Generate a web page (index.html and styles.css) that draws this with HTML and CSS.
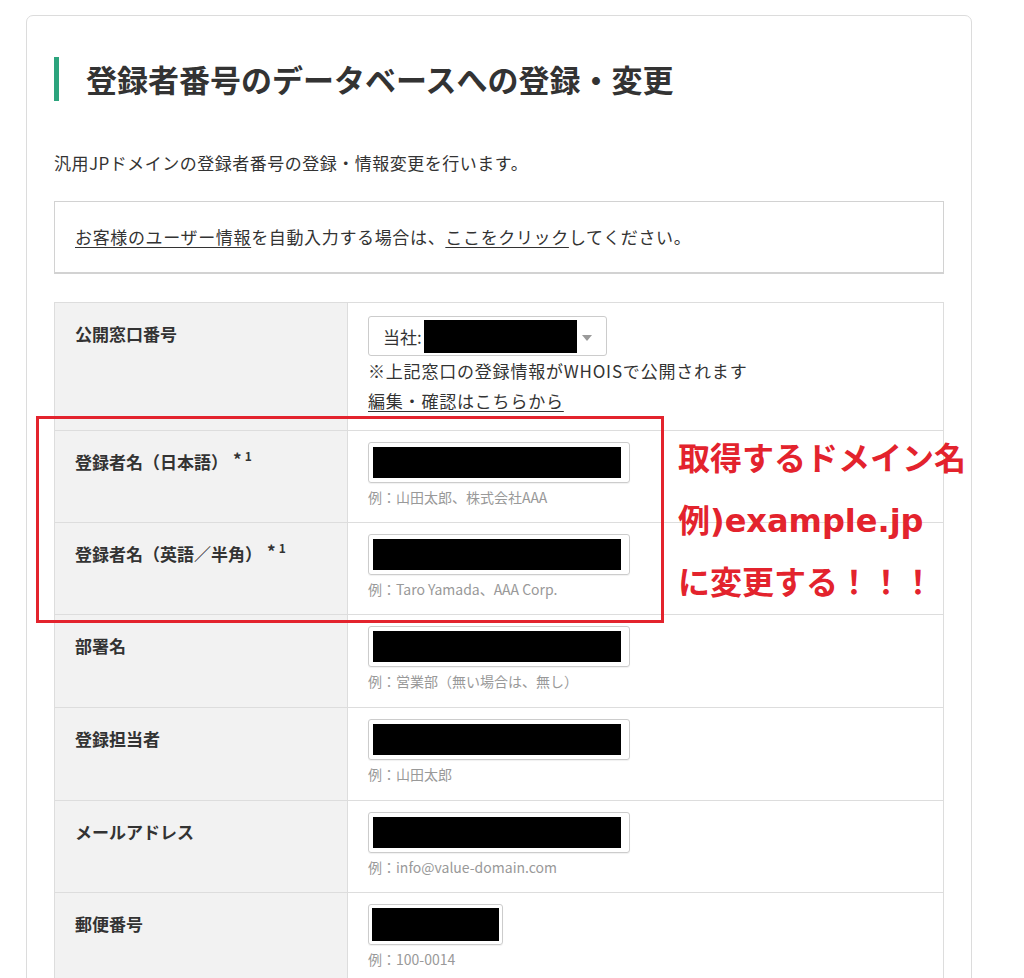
FILE: index.html
```html
<!DOCTYPE html>
<html lang="ja">
<head>
<meta charset="utf-8">
<title>登録者番号のデータベースへの登録・変更</title>
<link rel="stylesheet" href="styles.css">
</head>
<body>
<div class="page">
  <div class="card">
    <h1 class="title">登録者番号のデータベースへの登録・変更</h1>
    <p class="lead">汎用JPドメインの登録者番号の登録・情報変更を行います。</p>
    <div class="notice">
      <a class="link" href="#">お客様のユーザー情報</a>を自動入力する場合は、<a class="link" href="#">ここをクリック</a>してください。
    </div>
    <div class="form-table">
      <div class="row">
        <div class="th">公開窓口番号</div>
        <div class="td td-first">
          <div class="select">
            <span class="select-label">当社:</span>
            <span class="redact redact-select"></span>
            <span class="arrow"></span>
          </div>
          <p class="note">※上記窓口の登録情報がWHOISで公開されます</p>
          <p class="note"><a class="link" href="#">編集・確認はこちらから</a></p>
        </div>
      </div>
      <div class="row">
        <div class="th">登録者名（日本語）<span class="req">*<sup>1</sup></span></div>
        <div class="td">
          <div class="input"><span class="redact"></span></div>
          <p class="hint">例：山田太郎、株式会社AAA</p>
        </div>
      </div>
      <div class="row">
        <div class="th">登録者名（英語／半角）<span class="req">*<sup>1</sup></span></div>
        <div class="td">
          <div class="input"><span class="redact"></span></div>
          <p class="hint">例：Taro Yamada、AAA Corp.</p>
        </div>
      </div>
      <div class="row">
        <div class="th">部署名</div>
        <div class="td td-tall">
          <div class="input"><span class="redact"></span></div>
          <p class="hint">例：営業部（無い場合は、無し）</p>
        </div>
      </div>
      <div class="row">
        <div class="th">登録担当者</div>
        <div class="td td-tall">
          <div class="input"><span class="redact"></span></div>
          <p class="hint">例：山田太郎</p>
        </div>
      </div>
      <div class="row">
        <div class="th">メールアドレス</div>
        <div class="td">
          <div class="input"><span class="redact"></span></div>
          <p class="hint">例：info@value-domain.com</p>
        </div>
      </div>
      <div class="row">
        <div class="th">郵便番号</div>
        <div class="td">
          <div class="input input-short"><span class="redact"></span></div>
          <p class="hint">例：100-0014</p>
        </div>
      </div>
    </div>
  </div>

  <div class="annot-box"></div>
  <div class="annot-text">
    <p>取得するドメイン名</p>
    <p>例)example.jp</p>
    <p>に変更する！！！</p>
  </div>
</div>
</body>
</html>
```

FILE: styles.css
```css
* { box-sizing: border-box; }

html, body {
  margin: 0;
  padding: 0;
  background: #ffffff;
}

body {
  font-family: "Noto Sans CJK JP", "Noto Sans", sans-serif;
  color: #333333;
}

.page {
  position: relative;
  width: 1024px;
  height: 978px;
  overflow: hidden;
}

.card {
  margin: 15px 0 0 26px;
  width: 946px;
  min-height: 1000px;
  border: 1px solid #dcdcdc;
  border-radius: 7px;
  padding: 41px 27px 0 27px;
}

.title {
  margin: 0;
  border-left: 5px solid #2ca47d;
  padding-left: 27px;
  height: 44px;
  font-size: 31px;
  line-height: 44px;
  font-weight: 700;
  color: #333333;
}

.lead {
  margin: 50px 0 0 0;
  font-size: 17px;
  line-height: 24px;
  letter-spacing: 0.5px;
  color: #333333;
}

.notice {
  margin-top: 26px;
  border: 1px solid #d2d2d2;
  border-bottom: 2px solid #d2d2d2;
  padding: 22px 20px 22px 20px;
  font-size: 17px;
  line-height: 26px;
  letter-spacing: 0.65px;
  color: #333333;
}

.link {
  color: #333333;
  text-decoration: underline;
  text-underline-offset: 3px;
}

.form-table {
  margin-top: 28px;
  border: 1px solid #dddddd;
}

.row {
  display: grid;
  grid-template-columns: 293px 1fr;
  border-top: 1px solid #dddddd;
}

.row:first-child {
  border-top: none;
}

.th {
  background: #f2f2f2;
  border-right: 1px solid #dddddd;
  padding: 18px 20px 0 20px;
  font-size: 17px;
  line-height: 26px;
  font-weight: 700;
  color: #333333;
}

.req {
  font-size: 17px;
  font-weight: 700;
  margin-left: 5px;
  line-height: 0;
  vertical-align: 3px;
}

.req sup {
  font-size: 12px;
  margin-left: 3px;
  vertical-align: 5px;
}

.td {
  padding: 11px 20px 16px 20px;
}

.td-tall {
  padding-bottom: 17px;
}

.td-first {
  padding: 13px 20px 14px 20px;
}

.select {
  position: relative;
  display: flex;
  align-items: center;
  width: 239px;
  height: 40px;
  border: 1px solid #cccccc;
  border-radius: 3px;
  padding-left: 14px;
  background: #ffffff;
}

.select-label {
  font-size: 17px;
  line-height: 1;
  color: #333333;
}

.redact {
  display: block;
  background: #000000;
  height: 31px;
  width: 248px;
}

.redact-select {
  width: 153px;
  height: 33px;
  margin-left: 2px;
}

.arrow {
  position: absolute;
  right: 14px;
  top: 18px;
  width: 0;
  height: 0;
  border-left: 5px solid transparent;
  border-right: 5px solid transparent;
  border-top: 6px solid #9a9a9a;
}

.note {
  margin: 0;
  font-size: 17px;
  line-height: 30px;
  letter-spacing: 0.8px;
  color: #333333;
}

.input {
  width: 262px;
  height: 41px;
  border: 1px solid #cccccc;
  border-radius: 3px;
  box-shadow: 0 1px 1px rgba(0, 0, 0, 0.06);
  padding: 4px 8px 4px 4px;
}

.input-short {
  width: 135px;
  padding: 3px 3px 3px 3px;
}

.input-short .redact {
  width: 127px;
  height: 33px;
}

.hint {
  margin: 5px 0 0 0;
  font-size: 14px;
  line-height: 18px;
  color: #999999;
}

.annot-box {
  position: absolute;
  left: 36px;
  top: 416px;
  width: 628px;
  height: 207px;
  border: 3px solid #e3232d;
}

.annot-text {
  position: absolute;
  left: 678px;
  top: 428px;
  font-family: "DejaVu Sans", "Noto Sans CJK JP", sans-serif;
  font-size: 32px;
  font-weight: 700;
  color: #e3232d;
}

.annot-text p {
  margin: 0;
  height: 62px;
  line-height: 62px;
  white-space: nowrap;
}
```
